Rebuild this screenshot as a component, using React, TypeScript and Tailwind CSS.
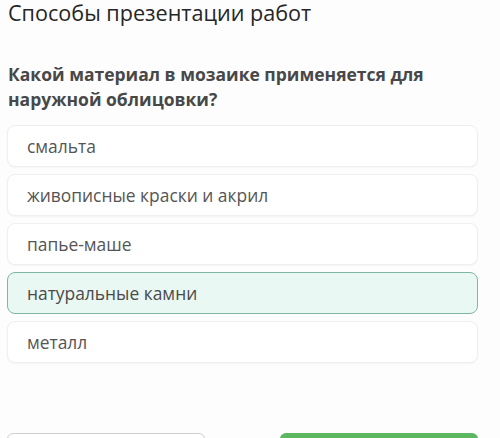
const options = [
  { label: "смальта", selected: false },
  { label: "живописные краски и акрил", selected: false },
  { label: "папье-маше", selected: false },
  { label: "натуральные камни", selected: true },
  { label: "металл", selected: false },
];

export default function App() {
  return (
    <div
      className="h-[438px] w-[500px] overflow-hidden bg-[#fdfdfd]"
      style={{ fontFamily: '"Open Sans", sans-serif' }}
    >
      <div className="pl-[7px] pr-[22px]">
        <h1 className="pl-px text-[21.6px] leading-[26px] text-[#262626]">Способы презентации работ</h1>
        <p className="mt-[36px] pl-px text-[17.5px] font-bold leading-[25px] text-[#484848]">
          Какой материал в мозаике применяется для наружной облицовки?
        </p>
        <ul className="mt-[13px] flex flex-col gap-[7px]">
          {options.map((o) => (
            <li
              key={o.label}
              className={
                o.selected
                  ? "flex h-[42px] items-center rounded-[8px] border border-[#7fb5a3] bg-[#eaf8f3] pl-[19px] text-[17.4px] text-[#4a4a4a]"
                  : "flex h-[42px] items-center rounded-[8px] border border-[#efefef] bg-white pl-[19px] text-[17.4px] text-[#555] shadow-[0_1px_2px_rgba(0,0,0,0.04)]"
              }
            >
              {o.label}
            </li>
          ))}
        </ul>
        <div className="mt-[70px] flex justify-between">
          <div className="h-[30px] w-[198px] rounded-[6px] border border-[#cfcfcf] bg-white" />
          <div className="h-[30px] w-[198px] rounded-[6px] bg-[#5cb860]" />
        </div>
      </div>
    </div>
  );
}
